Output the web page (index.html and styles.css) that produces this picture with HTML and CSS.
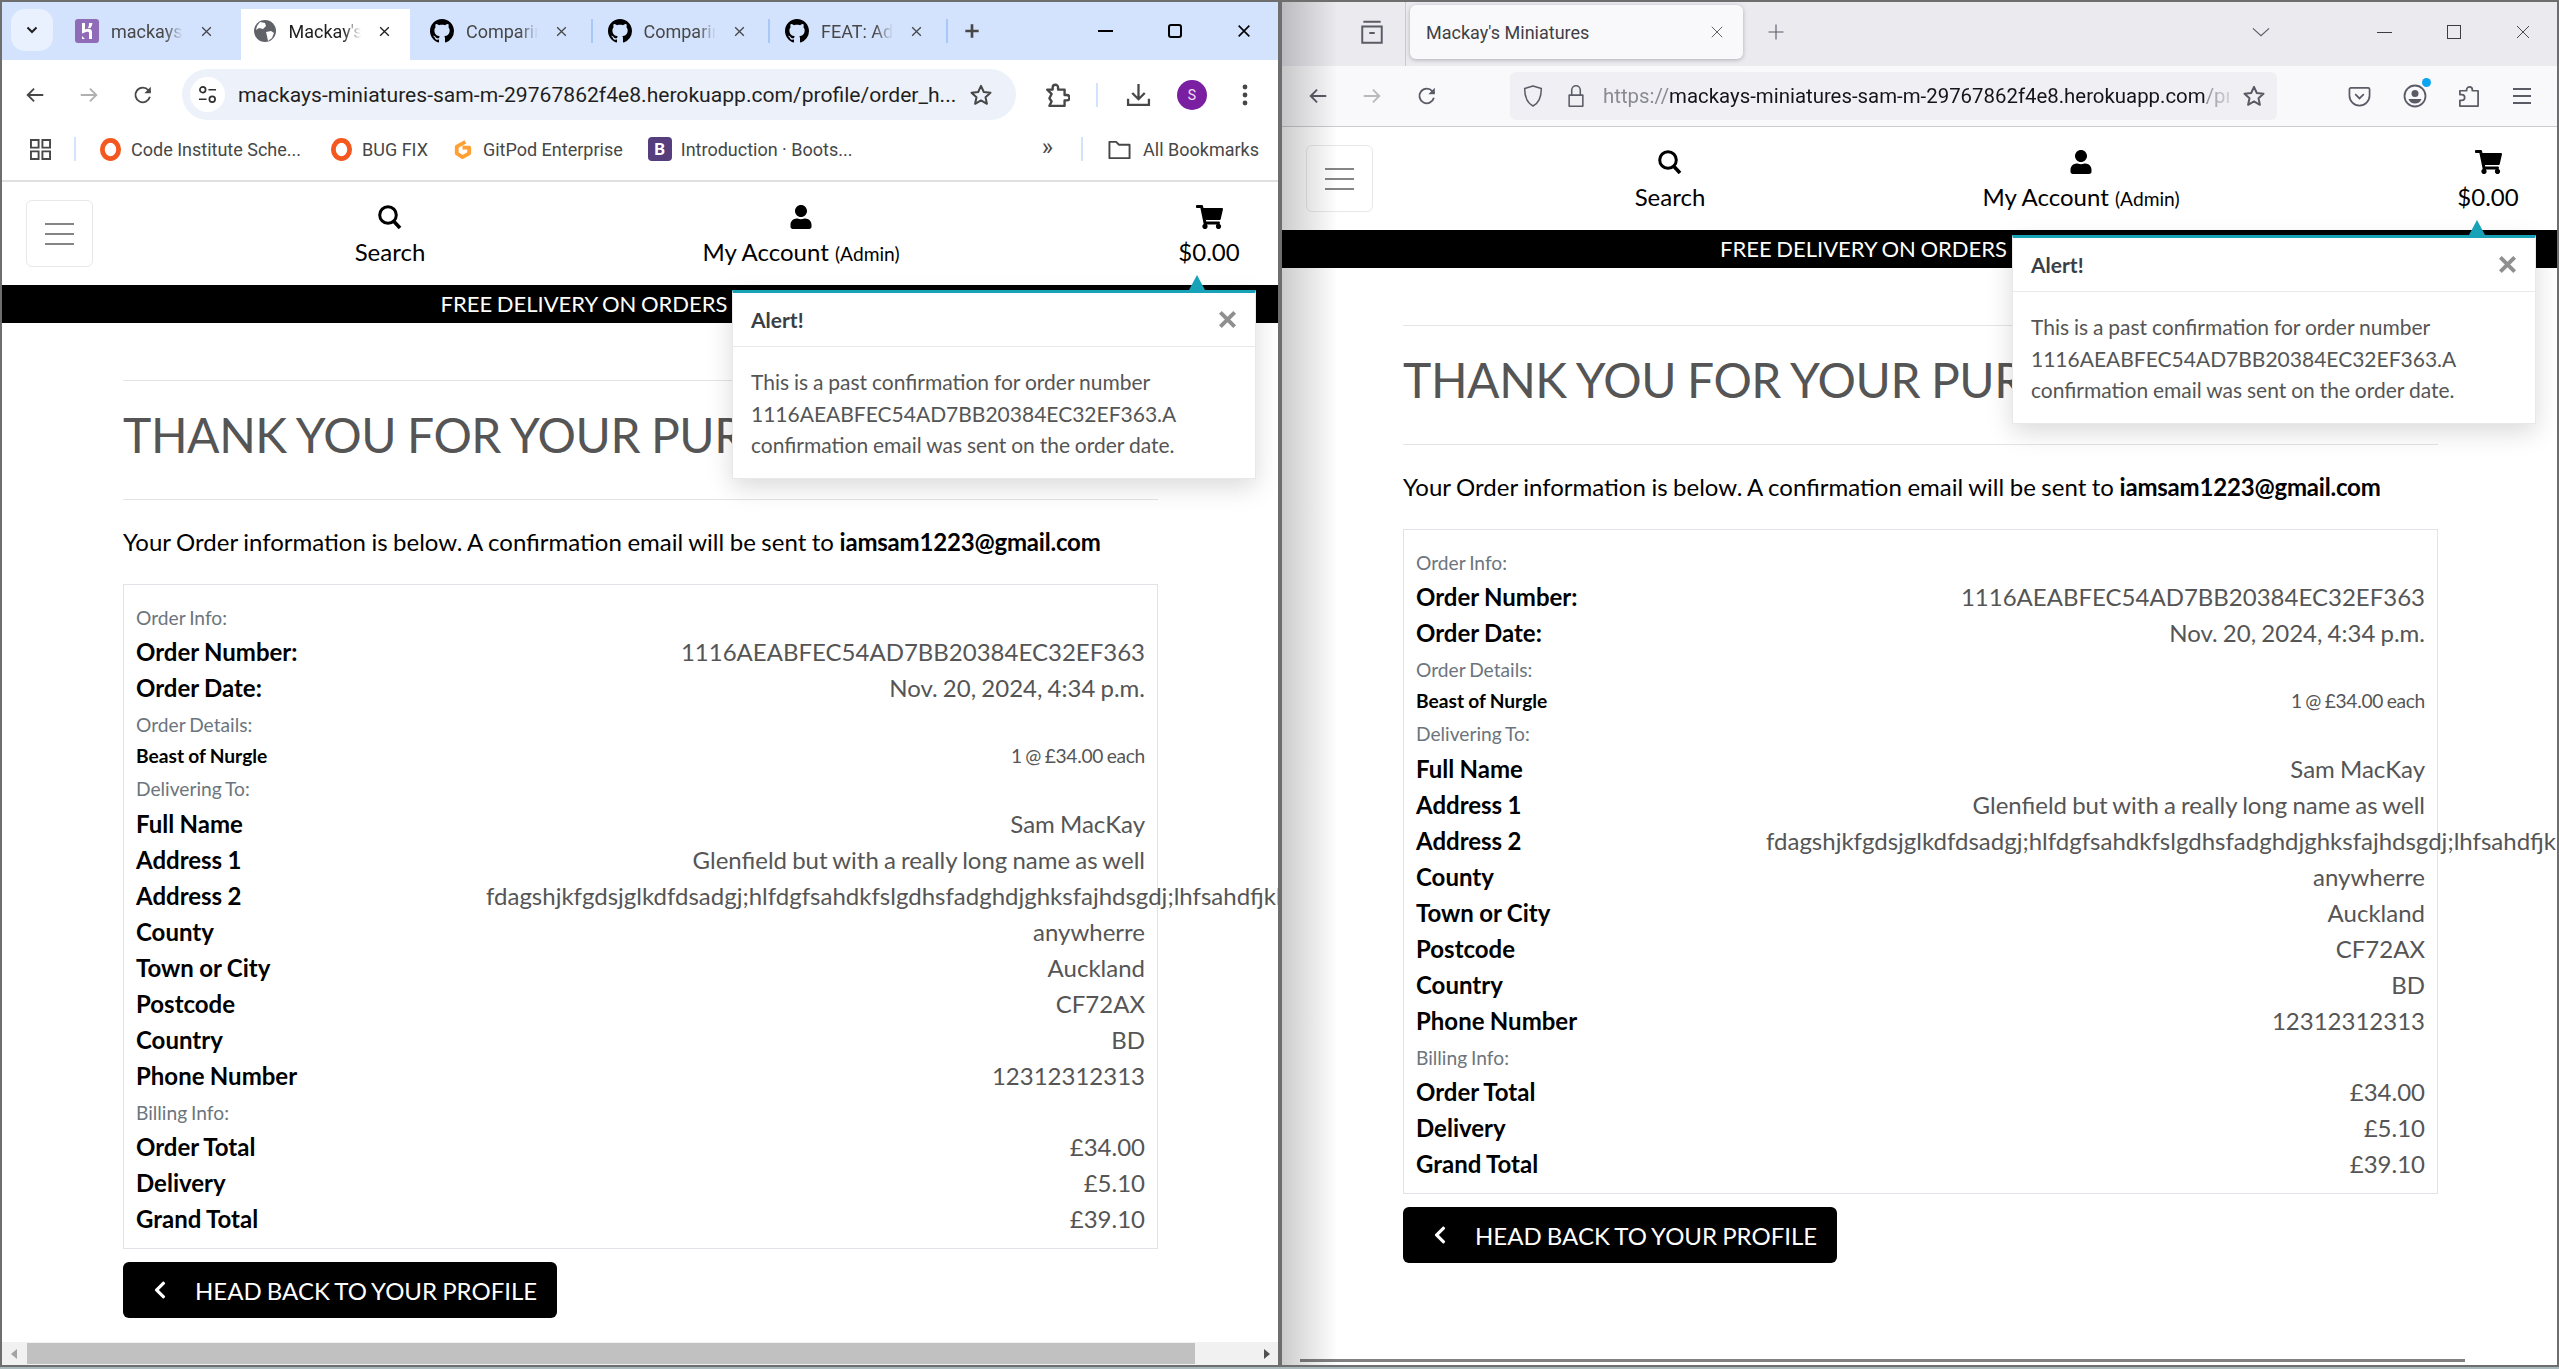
FILE: index.html
```html
<!DOCTYPE html>
<html lang="en">
<head>
    <meta charset="UTF-8">
    <title>Mackay's Miniatures</title>
    <link rel="stylesheet" href="styles.css">
</head>
<body>
    <svg class="sprite" width="0" height="0">
        <symbol id="i-search" viewBox="0 0 24 24"><circle cx="10" cy="10" r="8.300" fill="none" stroke="currentColor" stroke-width="3"/><path d="M15.500 16l6.500 7" fill="none" stroke="currentColor" stroke-width="3.600"/></symbol>
        <symbol id="i-user" viewBox="0 0 448 512"><path d="M224 256c70.7 0 128-57.3 128-128S294.7 0 224 0 96 57.3 96 128s57.3 128 128 128zm89.6 32h-16.7c-22.2 10.2-46.9 16-72.9 16s-50.6-5.8-72.9-16h-16.7C60.2 288 0 348.2 0 422.4V464c0 26.5 21.5 48 48 48h352c26.5 0 48-21.5 48-48v-41.6c0-74.2-60.2-134.4-134.4-134.4z"/></symbol>
        <symbol id="i-cart" viewBox="0 0 576 512"><path d="M528.12 301.319l47.273-208C578.806 78.301 567.391 64 551.99 64H159.208l-9.166-44.81C147.758 8.021 137.93 0 126.529 0H24C10.745 0 0 10.745 0 24v16c0 13.255 10.745 24 24 24h69.883l70.248 343.435C147.325 417.1 136 435.222 136 456c0 30.928 25.072 56 56 56s56-25.072 56-56c0-15.674-6.447-29.835-16.824-40h209.647C430.447 426.165 424 440.326 424 456c0 30.928 25.072 56 56 56s56-25.072 56-56c0-22.172-12.888-41.332-31.579-50.405l5.517-24.276c3.413-15.018-8.002-29.319-23.403-29.319H218.117l-6.545-32h293.145c11.206 0 20.92-7.754 23.403-18.681z"/></symbol>
        <symbol id="i-chevron" viewBox="0 0 320 512"><path d="M34.52 239.03L228.87 44.69c9.37-9.37 24.57-9.37 33.94 0l22.67 22.67c9.36 9.36 9.37 24.52.04 33.9L131.49 256l154.02 154.75c9.34 9.38 9.32 24.54-.04 33.9l-22.67 22.67c-9.37 9.37-24.57 9.37-33.94 0L34.52 272.97c-9.37-9.37-9.37-24.57 0-33.94z"/></symbol>
        <symbol id="i-github" viewBox="0 0 16 16"><path d="M8 0C3.58 0 0 3.58 0 8c0 3.54 2.29 6.53 5.47 7.59.4.07.55-.17.55-.38 0-.19-.01-.82-.01-1.49-2.01.37-2.53-.49-2.69-.94-.09-.23-.48-.94-.82-1.13-.28-.15-.68-.52-.01-.53.63-.01 1.08.58 1.23.82.72 1.21 1.87.87 2.33.66.07-.52.28-.87.51-1.07-1.78-.2-3.64-.89-3.64-3.95 0-.87.31-1.59.82-2.15-.08-.2-.36-1.02.08-2.12 0 0 .67-.21 2.2.82.64-.18 1.32-.27 2-.27.68 0 1.36.09 2 .27 1.53-1.04 2.2-.82 2.2-.82.44 1.1.16 1.92.08 2.12.51.56.82 1.27.82 2.15 0 3.07-1.87 3.75-3.65 3.95.29.25.54.73.54 1.48 0 1.07-.01 1.93-.01 2.2 0 .21.15.46.55.38A8.013 8.013 0 0016 8c0-4.42-3.58-8-8-8z"/></symbol>
        <symbol id="i-back" viewBox="0 0 24 24"><path d="M21 12H4M11 5l-7 7 7 7" fill="none" stroke="currentColor" stroke-width="2"/></symbol>
        <symbol id="i-forward" viewBox="0 0 24 24"><path d="M3 12h17M13 5l7 7-7 7" fill="none" stroke="currentColor" stroke-width="2"/></symbol>
        <symbol id="i-reload" viewBox="0 0 24 24"><path d="M19.500 14a8 8 0 1 1-1.600-7.200L20 9" fill="none" stroke="currentColor" stroke-width="2"/><path d="M20.500 3v7h-7z" fill="currentColor"/></symbol>
        <symbol id="i-star" viewBox="0 0 24 24"><path d="M12 2.800l2.800 6.200 6.700.7-5 4.500 1.400 6.600L12 17.400l-5.900 3.400 1.400-6.600-5-4.500 6.700-.7z" fill="none" stroke="currentColor" stroke-width="2" stroke-linejoin="round"/></symbol>
        <symbol id="i-close" viewBox="0 0 24 24"><path d="M4 4l16 16M20 4L4 20" fill="none" stroke="currentColor" stroke-width="2.400"/></symbol>
        <symbol id="i-bold-close" viewBox="0 0 24 24"><path d="M3 3l18 18M21 3L3 21" fill="none" stroke="currentColor" stroke-width="5"/></symbol>
        <symbol id="i-thin-close" viewBox="0 0 24 24"><path d="M3 3l18 18M21 3L3 21" fill="none" stroke="currentColor" stroke-width="1.400"/></symbol>
        <symbol id="i-plus" viewBox="0 0 24 24"><path d="M12 2v20M2 12h20" fill="none" stroke="currentColor" stroke-width="4"/></symbol>
    </svg>

    <!-- chrome window -->
    <div class="window window-chrome">
        <div class="ch-tabs">
            <button class="ch-tab-search"><svg class="ch-caret" viewBox="0 0 12 8"><path d="M1.500 1.500L6 6l4.500-4.500" fill="none" stroke="currentColor" stroke-width="2"/></svg></button>
            <div class="ch-tab">
                <svg class="ch-fav" viewBox="0 0 24 24"><rect width="24" height="24" rx="3" fill="#8f6bb8"/><path d="M7 4h3v6.500c3-1.500 7-1 7 2.500v7h-3v-6c0-1.500-1.500-1.500-3-1l-4 1.500zM14 4h3.500c-.3 2-1 3.500-2 5H13c1-1.500 1-3.500 1-5zM7 17l3 3H7z" fill="#fff"/></svg>
                <span class="ch-tab-title">mackays-miniatures</span>
                <svg class="ch-tab-close"><use href="#i-close"/></svg>
            </div>
            <div class="ch-tab ch-tab-active">
                <svg class="ch-fav" viewBox="0 0 24 24"><circle cx="12" cy="12" r="11" fill="#5f6368"/><path d="M7 3l5 1 1 3-3 3-4-1-3 2 1-4zM13 13l5-1 3 2-2 5-4 3-1-5z" fill="#fff"/></svg>
                <span class="ch-tab-title">Mackay's Miniatures</span>
                <svg class="ch-tab-close"><use href="#i-close"/></svg>
            </div>
            <div class="ch-tab">
                <svg class="ch-fav"><use href="#i-github"/></svg>
                <span class="ch-tab-title">Comparing changes</span>
                <svg class="ch-tab-close"><use href="#i-close"/></svg>
            </div>
            <div class="ch-tab ch-tab-sep">
                <svg class="ch-fav"><use href="#i-github"/></svg>
                <span class="ch-tab-title">Comparing changes</span>
                <svg class="ch-tab-close"><use href="#i-close"/></svg>
            </div>
            <div class="ch-tab ch-tab-sep">
                <svg class="ch-fav"><use href="#i-github"/></svg>
                <span class="ch-tab-title">FEAT: Add order</span>
                <svg class="ch-tab-close"><use href="#i-close"/></svg>
            </div>
            <div class="ch-new-tab ch-tab-sep"><svg class="ch-plus"><use href="#i-plus"/></svg></div>
            <div class="ch-controls">
                <div class="ch-control"><span class="ch-min"></span></div>
                <div class="ch-control"><span class="ch-max"></span></div>
                <div class="ch-control"><svg class="ch-x"><use href="#i-close"/></svg></div>
            </div>
        </div>

        <div class="ch-toolbar">
            <div class="ch-btn"><svg class="ch-icon"><use href="#i-back"/></svg></div>
            <div class="ch-btn ch-btn-off"><svg class="ch-icon"><use href="#i-forward"/></svg></div>
            <div class="ch-btn"><svg class="ch-icon"><use href="#i-reload"/></svg></div>
            <div class="ch-address">
                <div class="ch-site-info">
                    <svg class="ch-tune" viewBox="0 0 20 20"><circle cx="5" cy="5" r="3" fill="none" stroke="currentColor" stroke-width="1.800"/><path d="M11 5h8M1 15h8" stroke="currentColor" stroke-width="1.800"/><circle cx="15" cy="15" r="3" fill="none" stroke="currentColor" stroke-width="1.800"/></svg>
                </div>
                <span class="ch-url">mackays-miniatures-sam-m-29767862f4e8.herokuapp.com/profile/order_h...</span>
                <svg class="ch-star"><use href="#i-star"/></svg>
            </div>
            <svg class="ch-puzzle" viewBox="0 0 24 24"><path d="M3 7h5V5a2.500 2.500 0 0 1 5 0v2h6v5h2a2.500 2.500 0 0 1 0 5h-2v5H5l2-4-2-3 2-4z" fill="none" stroke="currentColor" stroke-width="2.200" stroke-linejoin="round"/></svg>
            <span class="ch-toolbar-sep"></span>
            <svg class="ch-download" viewBox="0 0 24 24"><path d="M12 2v14M6 10.500l6 6 6-6M2 16v6h20v-6" fill="none" stroke="currentColor" stroke-width="2.200"/></svg>
            <span class="ch-avatar">S</span>
            <svg class="ch-dots" viewBox="0 0 6 24"><circle cx="3" cy="4" r="2.400" fill="currentColor"/><circle cx="3" cy="12" r="2.400" fill="currentColor"/><circle cx="3" cy="20" r="2.400" fill="currentColor"/></svg>
        </div>

        <div class="ch-bookmarks">
            <svg class="ch-apps" viewBox="0 0 22 22"><path d="M1 1h8v8H1zM13 1h8v8h-8zM1 13h8v8H1zM13 13h8v8h-8z" fill="none" stroke="currentColor" stroke-width="2"/></svg>
            <span class="ch-bm-sep"></span>
            <div class="ch-bm ch-bm-ci">
                <svg class="ch-bm-icon" viewBox="0 0 24 24"><ellipse cx="12" cy="12" rx="8.500" ry="9.500" fill="none" stroke="#f4581f" stroke-width="5"/></svg>
                <span>Code Institute Sche...</span>
            </div>
            <div class="ch-bm ch-bm-bug">
                <svg class="ch-bm-icon" viewBox="0 0 24 24"><ellipse cx="12" cy="12" rx="8.500" ry="9.500" fill="none" stroke="#f4581f" stroke-width="5"/></svg>
                <span>BUG FIX</span>
            </div>
            <div class="ch-bm ch-bm-pod">
                <svg class="ch-bm-icon" viewBox="0 0 24 24"><path d="M15 4L6 9v7l6 4 7-4v-6h-7" fill="none" stroke="#ffa035" stroke-width="4" stroke-linejoin="round"/></svg>
                <span>GitPod Enterprise</span>
            </div>
            <div class="ch-bm">
                <span class="ch-bm-boot">B</span>
                <span>Introduction · Boots...</span>
            </div>
            <span class="ch-bm-more">»</span>
            <span class="ch-bm-sep ch-bm-sep-right"></span>
            <div class="ch-bm ch-bm-all">
                <svg class="ch-bm-icon" viewBox="0 0 24 24"><path d="M1.500 4h7l3 3h11v14h-21z" fill="none" stroke="currentColor" stroke-width="2" stroke-linejoin="round"/></svg>
                <span>All Bookmarks</span>
            </div>
        </div>

        <div class="page">
            <header class="site-header">
                <button class="toggler"><span></span><span></span><span></span></button>
                <a class="nav-item nav-search"><svg class="nav-icon"><use href="#i-search"/></svg><span>Search</span></a>
                <a class="nav-item nav-account"><svg class="nav-icon"><use href="#i-user"/></svg><span>My Account <small>(Admin)</small></span></a>
                <a class="nav-item nav-cart"><svg class="nav-icon nav-icon-cart"><use href="#i-cart"/></svg><span>$0.00</span></a>
            </header>
            <div class="banner">FREE DELIVERY ON ORDERS OVER $50!</div>
            <main class="content">
                <hr class="rule">
                <h2 class="thanks">THANK YOU FOR YOUR PURCHASE</h2>
                <hr class="rule">
                <p class="lead">Your Order information is below. A confirmation email will be sent to <strong>iamsam1223@gmail.com</strong></p>
                <div class="order-card">
                    <div class="section-label">Order Info:</div>
                    <div class="info-row"><strong>Order Number:</strong><span>1116AEABFEC54AD7BB20384EC32EF363</span></div>
                    <div class="info-row"><strong>Order Date:</strong><span>Nov. 20, 2024, 4:34 p.m.</span></div>
                    <div class="section-label">Order Details:</div>
                    <div class="item-row"><strong>Beast of Nurgle</strong><span>1 @ £34.00 each</span></div>
                    <div class="section-label">Delivering To:</div>
                    <div class="info-row"><strong>Full Name</strong><span>Sam MacKay</span></div>
                    <div class="info-row"><strong>Address 1</strong><span>Glenfield but with a really long name as well</span></div>
                    <div class="info-row"><strong>Address 2</strong><span>fdagshjkfgdsjglkdfdsadgj;hlfdgfsahdkfslgdhsfadghdjghksfajhdsgdj;lhfsahdfjkhgsdfjkhgsdkjfhgsdf</span></div>
                    <div class="info-row"><strong>County</strong><span>anywherre</span></div>
                    <div class="info-row"><strong>Town or City</strong><span>Auckland</span></div>
                    <div class="info-row"><strong>Postcode</strong><span>CF72AX</span></div>
                    <div class="info-row"><strong>Country</strong><span>BD</span></div>
                    <div class="info-row"><strong>Phone Number</strong><span>12312312313</span></div>
                    <div class="section-label">Billing Info:</div>
                    <div class="info-row"><strong>Order Total</strong><span>£34.00</span></div>
                    <div class="info-row"><strong>Delivery</strong><span>£5.10</span></div>
                    <div class="info-row"><strong>Grand Total</strong><span>£39.10</span></div>
                </div>
                <a class="back-btn"><svg class="back-icon"><use href="#i-chevron"/></svg>HEAD BACK TO YOUR PROFILE</a>
            </main>
            <div class="toast">
                <span class="toast-arrow"></span>
                <div class="toast-head"><strong>Alert!</strong><svg class="toast-close"><use href="#i-bold-close"/></svg></div>
                <div class="toast-body">This is a past confirmation for order number 1116AEABFEC54AD7BB20384EC32EF363.A confirmation email was sent on the order date.</div>
            </div>
        </div>

        <div class="ch-scrollbar">
            <span class="sb-arrow sb-left"></span>
            <span class="sb-thumb"></span>
            <span class="sb-arrow sb-right"></span>
        </div>
    </div>

    <!-- firefox window -->
    <div class="window window-firefox">
        <div class="ff-tabs">
            <svg class="ff-sidebar" viewBox="0 0 24 24"><path d="M4 2.500h16M3 7h18v15H3zM9.500 13h5" fill="none" stroke="currentColor" stroke-width="1.800"/></svg>
            <span class="ff-tabs-sep"></span>
            <div class="ff-tab">
                <span>Mackay's Miniatures</span>
                <svg class="ff-tab-close"><use href="#i-thin-close"/></svg>
            </div>
            <svg class="ff-plus" viewBox="0 0 24 24"><path d="M12 2v20M2 12h20" fill="none" stroke="currentColor" stroke-width="1.500"/></svg>
            <svg class="ff-tablist" viewBox="0 0 20 10"><path d="M1 1l9 8 9-8" fill="none" stroke="currentColor" stroke-width="1.300"/></svg>
            <div class="ff-controls">
                <div class="ff-control"><span class="ff-min"></span></div>
                <div class="ff-control"><span class="ff-max"></span></div>
                <div class="ff-control"><svg class="ff-x"><use href="#i-thin-close"/></svg></div>
            </div>
        </div>
        <div class="ff-toolbar">
            <svg class="ff-btn ff-back"><use href="#i-back"/></svg>
            <svg class="ff-btn ff-forward"><use href="#i-forward"/></svg>
            <svg class="ff-btn ff-reload"><use href="#i-reload"/></svg>
            <div class="ff-address">
                <svg class="ff-shield" viewBox="0 0 24 28"><path d="M12 2l10 3c0 10-2 17-10 21C4 22 2 15 2 5z" fill="none" stroke="currentColor" stroke-width="1.800" stroke-linejoin="round"/></svg>
                <svg class="ff-lock" viewBox="0 0 20 28"><path d="M2 13h16v13H2zM5 13V7a5 5 0 0 1 10 0v6" fill="none" stroke="currentColor" stroke-width="1.800" stroke-linejoin="round"/></svg>
                <span class="ff-url"><span class="ff-url-dim">https://</span>mackays-miniatures-sam-m-29767862f4e8.herokuapp.com<span class="ff-url-dim">/profile/order_history</span></span>
                <svg class="ff-star"><use href="#i-star"/></svg>
            </div>
            <svg class="ff-pocket" viewBox="0 0 24 24"><path d="M3 3h18a1.500 1.500 0 0 1 1.500 1.500V11a10.500 10.500 0 0 1-21 0V4.500A1.500 1.500 0 0 1 3 3zM7.500 9.500L12 14l4.500-4.500" fill="none" stroke="currentColor" stroke-width="1.800"/></svg>
            <span class="ff-profile">
                <svg viewBox="0 0 24 24"><circle cx="12" cy="12" r="10.500" fill="none" stroke="currentColor" stroke-width="1.800"/><circle cx="12" cy="9.500" r="3.500" fill="currentColor"/><path d="M5.500 15h13c-1 3-3.500 4.500-6.500 4.500S6.500 18 5.500 15z" fill="currentColor"/></svg>
                <span class="ff-dot"></span>
            </span>
            <svg class="ff-ext" viewBox="0 0 24 24"><path d="M13 2a3 3 0 0 1 3 3v1h6v16H3v-6h2a3 3 0 0 0 0-6H3V6h7V5a3 3 0 0 1 3-3z" fill="none" stroke="currentColor" stroke-width="1.800" stroke-linejoin="round"/></svg>
            <svg class="ff-menu" viewBox="0 0 24 20"><path d="M3 3h18M3 10h18M3 17h18" stroke="currentColor" stroke-width="1.800"/></svg>
        </div>

        <div class="page">
            <header class="site-header">
                <button class="toggler"><span></span><span></span><span></span></button>
                <a class="nav-item nav-search"><svg class="nav-icon"><use href="#i-search"/></svg><span>Search</span></a>
                <a class="nav-item nav-account"><svg class="nav-icon"><use href="#i-user"/></svg><span>My Account <small>(Admin)</small></span></a>
                <a class="nav-item nav-cart"><svg class="nav-icon nav-icon-cart"><use href="#i-cart"/></svg><span>$0.00</span></a>
            </header>
            <div class="banner">FREE DELIVERY ON ORDERS OVER $50!</div>
            <main class="content">
                <hr class="rule">
                <h2 class="thanks">THANK YOU FOR YOUR PURCHASE</h2>
                <hr class="rule">
                <p class="lead">Your Order information is below. A confirmation email will be sent to <strong>iamsam1223@gmail.com</strong></p>
                <div class="order-card">
                    <div class="section-label">Order Info:</div>
                    <div class="info-row"><strong>Order Number:</strong><span>1116AEABFEC54AD7BB20384EC32EF363</span></div>
                    <div class="info-row"><strong>Order Date:</strong><span>Nov. 20, 2024, 4:34 p.m.</span></div>
                    <div class="section-label">Order Details:</div>
                    <div class="item-row"><strong>Beast of Nurgle</strong><span>1 @ £34.00 each</span></div>
                    <div class="section-label">Delivering To:</div>
                    <div class="info-row"><strong>Full Name</strong><span>Sam MacKay</span></div>
                    <div class="info-row"><strong>Address 1</strong><span>Glenfield but with a really long name as well</span></div>
                    <div class="info-row"><strong>Address 2</strong><span>fdagshjkfgdsjglkdfdsadgj;hlfdgfsahdkfslgdhsfadghdjghksfajhdsgdj;lhfsahdfjkhgsdfjkhgsdkjfhgsdf</span></div>
                    <div class="info-row"><strong>County</strong><span>anywherre</span></div>
                    <div class="info-row"><strong>Town or City</strong><span>Auckland</span></div>
                    <div class="info-row"><strong>Postcode</strong><span>CF72AX</span></div>
                    <div class="info-row"><strong>Country</strong><span>BD</span></div>
                    <div class="info-row"><strong>Phone Number</strong><span>12312312313</span></div>
                    <div class="section-label">Billing Info:</div>
                    <div class="info-row"><strong>Order Total</strong><span>£34.00</span></div>
                    <div class="info-row"><strong>Delivery</strong><span>£5.10</span></div>
                    <div class="info-row"><strong>Grand Total</strong><span>£39.10</span></div>
                </div>
                <a class="back-btn"><svg class="back-icon"><use href="#i-chevron"/></svg>HEAD BACK TO YOUR PROFILE</a>
            </main>
            <div class="toast">
                <span class="toast-arrow"></span>
                <div class="toast-head"><strong>Alert!</strong><svg class="toast-close"><use href="#i-bold-close"/></svg></div>
                <div class="toast-body">This is a past confirmation for order number 1116AEABFEC54AD7BB20384EC32EF363.A confirmation email was sent on the order date.</div>
            </div>
            <span class="ff-scroll-thumb"></span>
        </div>
    </div>
</body>
</html>
```

FILE: styles.css
```css
* {
    box-sizing: border-box;
}
html, body {
    height: 100%;
}
body {
    margin: 0;
    height: 1369px;
    display: flex;
    align-items: flex-start;
    overflow: hidden;
    background-color: #a9b9bd;
    font-family: "Lato", sans-serif;
}
.sprite {
    position: absolute;
}
button {
    padding: 0;
    font: inherit;
}

.window {
    position: relative;
    height: 1367px;
    display: flex;
    flex-direction: column;
    overflow: hidden;
    background-color: #fff;
    border-top: 2px solid #6e6e6e;
    border-bottom: 2px solid #6e6e6e;
}
.window-chrome {
    width: 1282px;
    border-left: 2px solid #6e6e6e;
    border-right: 4px solid #6e6e6e;
}
.window-firefox {
    width: 1277px;
    border-right: 2px solid #6e6e6e;
}
/* shadow cast by the chrome window */
.window-firefox::before {
    content: "";
    position: absolute;
    top: 0;
    bottom: 0;
    left: 0;
    width: 56px;
    z-index: 5;
    pointer-events: none;
    background: linear-gradient(to right, rgba(0, 0, 0, 0.2), rgba(0, 0, 0, 0));
}

/* chrome tabs */
.ch-tabs {
    height: 58px;
    flex: none;
    display: flex;
    background-color: #d3e3fd;
    font-family: "Roboto", sans-serif;
    color: #474747;
}
.ch-tab-search {
    width: 42px;
    height: 42px;
    margin: 7px 5px 0 9px;
    flex: none;
    border: none;
    border-radius: 14px;
    background-color: #e9f1fe;
    display: flex;
    align-items: center;
    justify-content: center;
    color: #1f1f1f;
}
.ch-caret {
    width: 12px;
    height: 8px;
}
.ch-tab {
    position: relative;
    width: 177.5px;
    flex: none;
    display: flex;
    align-items: center;
    padding-left: 17px;
}
.ch-tab-sep::before {
    content: "";
    position: absolute;
    left: 0;
    top: 17px;
    height: 24px;
    width: 2px;
    background-color: #a8c7fa;
}
.ch-tab-active {
    color: #1f1f1f;
    background: linear-gradient(#fff, #fff) no-repeat 5.500px 7px / 169px 51px;
}
.ch-fav {
    width: 24px;
    height: 24px;
    flex: none;
    margin-right: 12px;
    color: #24292f;
}
.ch-tab-title {
    width: 72px;
    flex: none;
    white-space: nowrap;
    overflow: hidden;
    font-size: 18px;
    -webkit-mask-image: linear-gradient(to right, #000 75%, transparent);
    mask-image: linear-gradient(to right, #000 75%, transparent);
}
.ch-tab-close {
    width: 13px;
    height: 13px;
    margin-left: 17px;
    flex: none;
}
.ch-new-tab {
    position: relative;
    width: 50px;
    flex: none;
    padding: 21px 0 0 18px;
}
.ch-plus {
    width: 16px;
    height: 16px;
    display: block;
}
.ch-controls {
    margin-left: auto;
    display: flex;
}
.ch-control {
    width: 69px;
    height: 58px;
    display: flex;
    align-items: center;
    justify-content: center;
    color: #000;
}
.ch-min {
    width: 15px;
    height: 2px;
    background-color: #000;
}
.ch-max {
    width: 14px;
    height: 14px;
    border: 2px solid #000;
    border-radius: 3px;
}
.ch-x {
    width: 16px;
    height: 16px;
}

/* chrome toolbar */
.ch-toolbar {
    height: 69px;
    flex: none;
    display: flex;
    align-items: center;
    padding-left: 6px;
    background-color: #fff;
    color: #474747;
    font-family: "Roboto", sans-serif;
}
.ch-btn {
    width: 54px;
    display: flex;
    justify-content: center;
}
.ch-btn-off {
    color: #b0b0b0;
}
.ch-icon {
    width: 22px;
    height: 22px;
}
.ch-address {
    width: 834px;
    height: 51px;
    margin-left: 12px;
    padding-left: 8px;
    flex: none;
    display: flex;
    align-items: center;
    background-color: #edf2fa;
    border-radius: 26px;
}
.ch-site-info {
    width: 35px;
    height: 35px;
    flex: none;
    border-radius: 50%;
    background-color: #fff;
    display: flex;
    align-items: center;
    justify-content: center;
    color: #303030;
}
.ch-tune {
    width: 19px;
    height: 19px;
}
.ch-url {
    margin-left: 13px;
    width: 722px;
    flex: none;
    white-space: nowrap;
    overflow: hidden;
    font-size: 21.100px;
    color: #1f1f1f;
}
.ch-star {
    width: 24px;
    height: 24px;
    margin-left: 9px;
    flex: none;
}
.ch-puzzle {
    width: 26px;
    height: 26px;
    margin-left: 28px;
    flex: none;
}
.ch-toolbar-sep {
    width: 2px;
    height: 24px;
    margin-left: 26px;
    background-color: #d3e3fd;
}
.ch-download {
    width: 25px;
    height: 25px;
    margin-left: 28px;
    flex: none;
}
.ch-avatar {
    width: 30px;
    height: 30px;
    margin-left: 26px;
    flex: none;
    border-radius: 50%;
    background-color: #7b1fa2;
    color: #f0e0f5;
    font-size: 14px;
    display: flex;
    align-items: center;
    justify-content: center;
}
.ch-dots {
    width: 6px;
    height: 24px;
    margin-left: 35px;
    flex: none;
}

/* bookmarks */
.ch-bookmarks {
    height: 51px;
    flex: none;
    display: flex;
    align-items: center;
    padding: 0 0 11px 28px;
    font-family: "Roboto", sans-serif;
    font-size: 18px;
    color: #474747;
    background-color: #fff;
}
.ch-apps {
    width: 21px;
    height: 21px;
    flex: none;
}
.ch-bm-sep {
    width: 2px;
    height: 24px;
    margin: 0 23px 0 23px;
    background-color: #d3e3fd;
}
.ch-bm {
    display: flex;
    align-items: center;
    margin-right: 26px;
    white-space: nowrap;
}
.ch-bm-ci {
    margin-right: 29px;
}
.ch-bm-bug {
    margin-right: 23px;
}
.ch-bm-pod {
    margin-right: 25px;
}
.ch-bm-icon {
    width: 23px;
    height: 23px;
    margin-right: 9px;
    flex: none;
}
.ch-bm-boot {
    width: 24px;
    height: 24px;
    margin-right: 9px;
    border-radius: 4px;
    background-color: #563d7c;
    color: #fff;
    font-size: 17px;
    font-weight: 700;
    display: flex;
    align-items: center;
    justify-content: center;
}
.ch-bm-more {
    margin-left: auto;
    font-size: 24px;
    line-height: 1;
    margin-top: -4px;
}
.ch-bm-sep-right {
    margin: 0 25px 0 28px;
}
.ch-bm-all {
    margin-right: 19px;
}
.ch-bm-all .ch-bm-icon {
    margin-right: 12px;
}

/* the page itself */
.page {
    position: relative;
    flex: 1;
    min-height: 0;
    overflow: hidden;
    background-color: #fff;
    word-spacing: -1px;
}
.window-chrome .page {
    border-top: 2px solid #e0e0e0;
}
.site-header {
    height: 103px;
    display: flex;
    align-items: flex-start;
    word-spacing: 0;
}
.toggler {
    width: 67px;
    height: 67px;
    margin: 18px 0 0 24px;
    flex: none;
    display: flex;
    flex-direction: column;
    justify-content: center;
    align-items: center;
    gap: 8px;
    background: #fff;
    border: 1px solid #e8e8e8;
    border-radius: 6px;
}
.toggler span {
    width: 29px;
    height: 2px;
    background-color: #858585;
}
.nav-item {
    display: flex;
    flex-direction: column;
    align-items: center;
    flex: none;
    padding-top: 23px;
    color: #000;
    font-size: 24px;
    line-height: 36px;
    white-space: nowrap;
}
.nav-item small {
    font-size: 19.200px;
}
.nav-icon {
    width: 24px;
    height: 24px;
    margin-bottom: 5px;
    display: block;
}
.nav-icon-cart {
    width: 27px;
}
.nav-search {
    width: 410px;
    margin-left: 92px;
}
.nav-account {
    width: 412px;
}
.nav-cart {
    width: 138px;
    margin-left: auto;
}
.banner {
    height: 38px;
    background-color: #000;
    color: #fff;
    font-size: 22px;
    line-height: 37px;
    text-align: center;
}
.content {
    width: 1035px;
    margin-left: 121px;
    padding-top: 57px;
}
.rule {
    height: 1px;
    margin: 0;
    border: none;
    background-color: #e4e4e4;
}
.thanks {
    margin: 0;
    height: 118px;
    font-size: 48px;
    font-weight: 400;
    line-height: 108px;
    letter-spacing: -0.45px;
    color: #555;
    white-space: nowrap;
}
.lead {
    margin: 0;
    height: 84px;
    padding-top: 24px;
    font-size: 24px;
    line-height: 36px;
    word-spacing: -0.6px;
    color: #000;
}
.lead strong {
    letter-spacing: -0.2px;
}
.order-card {
    height: 665px;
    padding: 18px 12px 0;
    border: 1px solid #e2e3e8;
}
.section-label {
    height: 29px;
    margin: 4px 0 2px;
    font-size: 19.200px;
    line-height: 29px;
    color: #6c757d;
}
.section-label:first-child {
    margin-top: 0;
}
.item-row + .section-label {
    margin-bottom: 3px;
}
.info-row, .item-row {
    display: flex;
    color: #555;
}
.info-row {
    height: 36px;
    font-size: 24px;
    line-height: 36px;
}
.item-row {
    height: 29px;
    margin-bottom: 1px;
    font-size: 19.200px;
    line-height: 29px;
}
.item-row span {
    letter-spacing: -0.3px;
}
.info-row strong, .item-row strong {
    width: 350px;
    flex: none;
    color: #000;
    word-spacing: -0.5px;
}
.info-row span, .item-row span {
    flex: 1;
    min-width: 0;
    text-align: right;
    white-space: nowrap;
}
.back-btn {
    width: 434px;
    height: 56px;
    margin-top: 13px;
    padding-left: 30px;
    display: flex;
    align-items: center;
    background-color: #000;
    border-radius: 6px;
    color: #fff;
    font-size: 24px;
    white-space: nowrap;
}
.back-icon {
    width: 14px;
    height: 20px;
    margin-right: 28px;
    fill: #fff;
    flex: none;
}

/* alert popup */
.toast {
    position: absolute;
    top: 108px;
    left: 730px;
    width: 524px;
    height: 189px;
    background-color: #fff;
    border: 1px solid #e8e8e8;
    border-top: 3px solid #17a2b8;
    box-shadow: 0 8px 24px rgba(0, 0, 0, 0.15);
    color: #555;
    word-spacing: -0.5px;
    z-index: 3;
}
.toast-arrow {
    position: absolute;
    top: -18px;
    left: 456px;
    width: 0;
    height: 0;
    border-left: 8px solid transparent;
    border-right: 8px solid transparent;
    border-bottom: 15px solid #17a2b8;
}
.toast-head {
    height: 54px;
    padding: 0 18px;
    display: flex;
    align-items: center;
    justify-content: space-between;
    border-bottom: 1px solid #e9e9e9;
    color: #3a3f45;
    font-size: 21px;
}
.toast-close {
    width: 19px;
    height: 19px;
    color: #8f8f8f;
}
.toast-body {
    padding: 19px 18px 0;
    font-size: 21px;
    line-height: 31.500px;
}

/* chrome scrollbar */
.ch-scrollbar {
    position: relative;
    height: 23px;
    flex: none;
    background-color: #f1f1f1;
}
.sb-thumb {
    position: absolute;
    top: 1px;
    left: 25px;
    width: 1168px;
    height: 21px;
    background-color: #c1c1c1;
}
.sb-arrow {
    position: absolute;
    top: 7px;
    width: 0;
    height: 0;
    border-top: 5px solid transparent;
    border-bottom: 5px solid transparent;
}
.sb-left {
    left: 9px;
    border-right: 6px solid #a3a3a3;
}
.sb-right {
    left: 1262px;
    border-left: 6px solid #505050;
}

/* firefox chrome */
.ff-tabs {
    height: 64px;
    flex: none;
    display: flex;
    align-items: center;
    background-color: #eaeaef;
    font-family: "Roboto", sans-serif;
    color: #5b5b66;
}
.ff-sidebar {
    width: 26px;
    height: 26px;
    margin: -4px 0 0 77px;
    flex: none;
}
.ff-tabs-sep {
    width: 1px;
    height: 64px;
    margin-left: 20px;
    background-color: #c9c9cf;
}
.ff-tab {
    width: 333px;
    height: 54px;
    margin: -4px 0 0 4px;
    padding: 0 19px 0 16px;
    display: flex;
    align-items: center;
    justify-content: space-between;
    background-color: #f9f9fb;
    border-radius: 6px;
    box-shadow: 0 1px 4px rgba(0, 0, 0, 0.25);
    font-size: 18px;
    color: #3f3f46;
}
.ff-tab-close {
    width: 14px;
    height: 14px;
}
.ff-plus {
    width: 18px;
    height: 18px;
    margin: -4px 0 0 24px;
    flex: none;
}
.ff-tablist {
    width: 18px;
    height: 10px;
    margin: -4px 0 0 467px;
    flex: none;
}
.ff-controls {
    margin-left: auto;
    display: flex;
}
.ff-control {
    width: 69px;
    height: 64px;
    padding-bottom: 4px;
    display: flex;
    align-items: center;
    justify-content: center;
    color: #3d3d3d;
}
.ff-min {
    width: 15px;
    height: 1px;
    background-color: #3d3d3d;
}
.ff-max {
    width: 14px;
    height: 14px;
    border: 1px solid #3d3d3d;
}
.ff-x {
    width: 16px;
    height: 16px;
}
.ff-toolbar {
    height: 61px;
    flex: none;
    display: flex;
    align-items: center;
    background-color: #f9f9fb;
    border-bottom: 1px solid #ccc;
    color: #5b5b66;
    font-family: "Roboto", sans-serif;
}
.ff-btn {
    width: 22px;
    height: 22px;
    flex: none;
}
.ff-back {
    margin-left: 25px;
}
.ff-forward {
    margin-left: 32px;
    color: #b8b8be;
}
.ff-reload {
    margin-left: 33px;
}
.ff-address {
    width: 767px;
    height: 48px;
    margin-left: 72px;
    padding-left: 13px;
    flex: none;
    display: flex;
    align-items: center;
    background-color: #f0f0f4;
    border-radius: 6px;
}
.ff-shield {
    width: 20px;
    height: 24px;
    flex: none;
}
.ff-lock {
    width: 18px;
    height: 24px;
    margin-left: 24px;
    flex: none;
}
.ff-url {
    width: 626px;
    margin-left: 18px;
    flex: none;
    overflow: hidden;
    white-space: nowrap;
    font-size: 20.400px;
    color: #15141a;
    -webkit-mask-image: linear-gradient(to right, #000 96%, rgba(0, 0, 0, 0.3));
    mask-image: linear-gradient(to right, #000 96%, rgba(0, 0, 0, 0.3));
}
.ff-url-dim {
    color: #8a8a92;
}
.ff-star {
    width: 24px;
    height: 24px;
    margin-left: 13px;
    flex: none;
}
.ff-pocket {
    width: 23px;
    height: 23px;
    margin-left: 71px;
    flex: none;
}
.ff-profile {
    position: relative;
    width: 24px;
    height: 24px;
    margin-left: 32px;
    flex: none;
}
.ff-profile svg {
    width: 24px;
    height: 24px;
    display: block;
}
.ff-dot {
    position: absolute;
    top: -6px;
    right: -4px;
    width: 9px;
    height: 9px;
    border-radius: 50%;
    background-color: #0ea5f0;
}
.ff-ext {
    width: 23px;
    height: 23px;
    margin-left: 30px;
    flex: none;
}
.ff-menu {
    width: 24px;
    height: 20px;
    margin-left: 30px;
    flex: none;
}
.ff-scroll-thumb {
    position: absolute;
    bottom: 3px;
    left: 18px;
    width: 1165px;
    height: 3px;
    background-color: #808080;
}
```
